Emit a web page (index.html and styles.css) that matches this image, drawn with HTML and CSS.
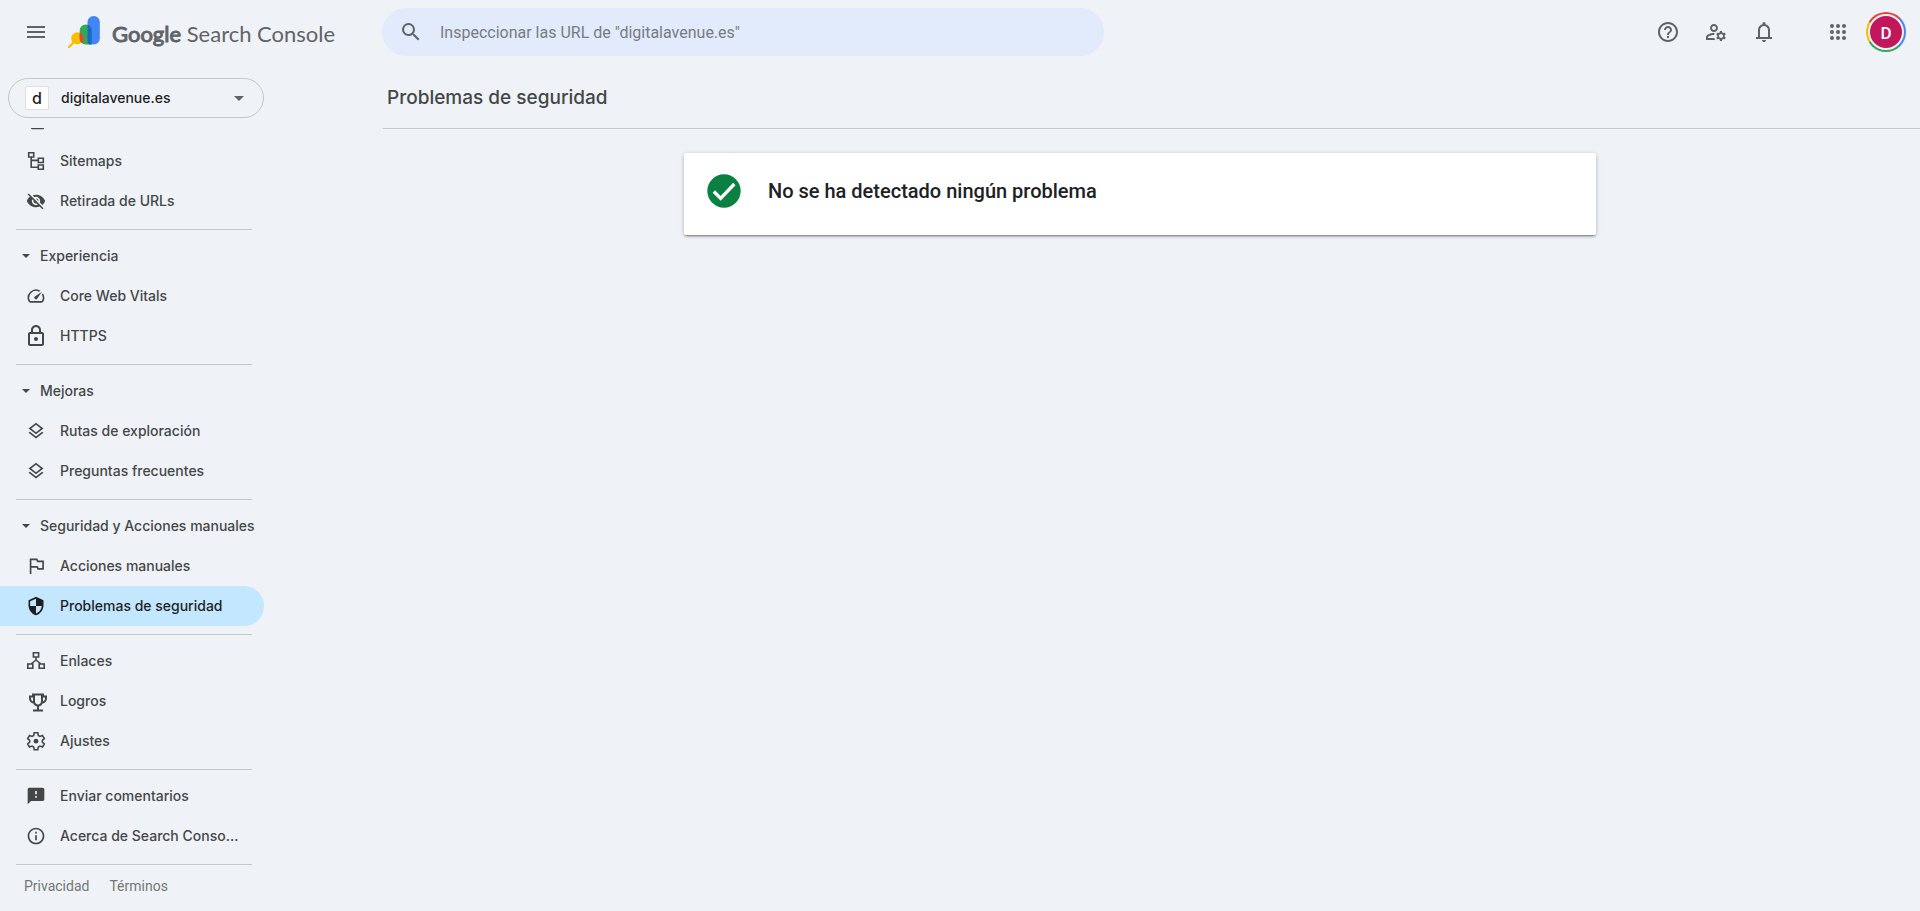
FILE: index.html
```html
<!DOCTYPE html>
<html lang="es">
<head>
<meta charset="utf-8">
<meta name="viewport" content="width=device-width, initial-scale=1">
<title>Problemas de seguridad</title>
<link rel="stylesheet" href="styles.css">
</head>
<body>
<header class="topbar">
  <div class="brand">
    <button class="icon-button" type="button" aria-label="Menú">
      <svg class="icon-lg" viewBox="0 0 24 24"><path d="M3 18h18v-2H3v2zm0-5h18v-2H3v2zm0-7v2h18V6H3z"/></svg>
    </button>
    <a class="logo" href="#">
      <svg class="logo-mark" viewBox="0 0 32 32">
        <path d="M1 31l6-6" stroke="#fbbc04" stroke-width="2.4" stroke-linecap="round"/>
        <circle cx="9.3" cy="22.3" r="6.1" fill="#fbbc04"/>
        <rect x="19.5" width="12.3" height="28.6" rx="6" fill="#4285f4"/>
        <path d="M11.7 14.5a6 6 0 0 1 12 0v14.1h-6a6 6 0 0 1-6-6z" fill="#34a853"/>
        <path d="M19.5 8.8a6 6 0 0 1 4.2 5.7v14.1h-1.2a3 3 0 0 1-3-3z" fill="#1967d2"/>
        <path d="M11.7 16.7a6.1 6.1 0 0 1 1.8 10.2 6 6 0 0 1-1.8-4.3z" fill="#ea4335"/>
      </svg>
      <span class="logo-text"><span class="logo-strong">Google</span> Search Console</span>
    </a>
  </div>
  <label class="search">
    <svg class="icon-lg" viewBox="0 0 24 24"><path d="M15.5 14h-.79l-.28-.27A6.47 6.47 0 0 0 16 9.5 6.5 6.5 0 1 0 9.5 16c1.61 0 3.09-.59 4.23-1.57l.27.28v.79l5 4.99L20.49 19l-4.99-5zm-6 0C7.01 14 5 11.99 5 9.5S7.01 5 9.5 5 14 7.01 14 9.5 11.99 14 9.5 14z"/></svg>
    <input class="search-input" type="text" aria-label="Inspeccionar URL" placeholder="Inspeccionar las URL de &quot;digitalavenue.es&quot;">
  </label>
  <div class="actions">
    <button class="icon-button" type="button" aria-label="Ayuda">
      <svg class="icon-lg" viewBox="0 0 24 24"><path d="M11 18h2v-2h-2v2zm1-16C6.48 2 2 6.48 2 12s4.48 10 10 10 10-4.48 10-10S17.52 2 12 2zm0 18c-4.41 0-8-3.59-8-8s3.59-8 8-8 8 3.59 8 8-3.59 8-8 8zm0-14c-2.21 0-4 1.79-4 4h2c0-1.1.9-2 2-2s2 .9 2 2c0 2-3 1.75-3 5h2c0-2.25 3-2.5 3-5 0-2.21-1.79-4-4-4z"/></svg>
    </button>
    <button class="icon-button" type="button" aria-label="Usuarios">
      <svg class="icon-lg" viewBox="0 0 24 24"><path d="M4 18v-.65c0-.34.16-.66.41-.81C6.1 15.53 8.03 15 10 15c.03 0 .05 0 .08.01.1-.7.3-1.37.59-1.98-.22-.02-.44-.03-.67-.03-2.42 0-4.68.67-6.61 1.82-.88.52-1.39 1.5-1.39 2.53V20h9.26c-.42-.6-.75-1.28-.97-2H4zM10 12c2.21 0 4-1.79 4-4s-1.79-4-4-4-4 1.79-4 4 1.79 4 4 4zm0-6c1.1 0 2 .9 2 2s-.9 2-2 2-2-.9-2-2 .9-2 2-2zM20.75 16c0-.22-.03-.42-.06-.63l1.14-1.01-1-1.73-1.45.49c-.32-.27-.68-.48-1.08-.63L18 11h-2l-.3 1.49c-.4.15-.76.36-1.08.63l-1.45-.49-1 1.73 1.14 1.01c-.03.21-.06.41-.06.63s.03.42.06.63l-1.14 1.01 1 1.73 1.45-.49c.32.27.68.48 1.08.63L16 21h2l.3-1.49c.4-.15.76-.36 1.08-.63l1.45.49 1-1.73-1.14-1.01c.03-.21.06-.41.06-.63zM17 18c-1.1 0-2-.9-2-2s.9-2 2-2 2 .9 2 2-.9 2-2 2z"/></svg>
    </button>
    <button class="icon-button" type="button" aria-label="Notificaciones">
      <svg class="icon-lg" viewBox="0 0 24 24"><path d="M4 19v-2h2v-7q0-2.075 1.25-3.688T10.5 4.2v-.7q0-.625.438-1.063T12 2t1.063.438T13.5 3.5v.7q2 .5 3.25 2.113T18 10v7h2v2zm8 3q-.825 0-1.413-.588T10 20h4q0 .825-.588 1.413T12 22m-4-5h8v-7q0-1.65-1.175-2.825T12 6T9.175 7.175T8 10z"/></svg>
    </button>
    <button class="icon-button apps" type="button" aria-label="Aplicaciones">
      <svg class="icon-lg" viewBox="0 0 24 24"><g><circle cx="6" cy="6" r="2"/><circle cx="12" cy="6" r="2"/><circle cx="18" cy="6" r="2"/><circle cx="6" cy="12" r="2"/><circle cx="12" cy="12" r="2"/><circle cx="18" cy="12" r="2"/><circle cx="6" cy="18" r="2"/><circle cx="12" cy="18" r="2"/><circle cx="18" cy="18" r="2"/></g></svg>
    </button>
    <button class="icon-button" type="button" aria-label="Cuenta">
      <span class="avatar-ring"><span class="avatar">D</span></span>
    </button>
  </div>
</header>
<div class="layout">
  <aside class="sidebar">
    <button class="property" type="button">
      <span class="property-badge">d</span>
      <span class="property-name">digitalavenue.es</span>
      <svg class="property-caret" viewBox="0 0 10 5"><path d="M0 0h10L5 5z"/></svg>
    </button>
    <nav class="nav">
      <div class="nav-clip"><svg class="clip-icon" viewBox="0 0 14 2"><path d="M0 0h14v.4a1.6 1.6 0 0 1-1 1H1a1.6 1.6 0 0 1-1-1z"/></svg></div>
      <a class="nav-item" href="#"><svg class="icon-lg" viewBox="0 0 24 24"><path class="line thin" d="M4.700 3.700h5v4.300h-5zM14.300 9.200h5v4.300h-5zM14.300 16h5v4.300h-5zM7.200 8v10.200h7M7.200 11.400h7"/></svg><span class="nav-label">Sitemaps</span></a>
      <a class="nav-item" href="#"><svg class="icon" viewBox="0 0 24 24"><path d="M12 7c2.760 0 5 2.240 5 5 0 .65-.13 1.260-.36 1.830l2.920 2.920c1.510-1.260 2.700-2.890 3.430-4.750-1.730-4.390-6-7.500-11-7.500-1.400 0-2.740.25-3.980.7l2.160 2.160C10.740 7.130 11.350 7 12 7zM2 4.270l2.740 2.740C3.080 8.300 1.780 10.020 1 12c1.730 4.390 6 7.500 11 7.500 1.550 0 3.030-.3 4.380-.84L19.730 22 21 20.730 3.270 3 2 4.270zM7.530 9.800l1.550 1.550c-.05.21-.08.43-.08.65 0 1.660 1.340 3 3 3 .22 0 .44-.03.65-.08l1.550 1.550c-.67.33-1.410.53-2.200.53-2.760 0-5-2.240-5-5 0-.79.2-1.530.53-2.200zm4.310-.78l3.150 3.150.02-.16c0-1.660-1.340-3-3-3l-.17.01z"/></svg><span class="nav-label">Retirada de URLs</span></a>
      <hr class="rule">
      <button class="nav-group" type="button"><svg class="group-caret" viewBox="0 0 8 4"><path d="M0 0h8L4 4z"/></svg><span class="nav-label">Experiencia</span></button>
      <a class="nav-item" href="#"><svg class="icon" viewBox="0 0 24 24"><path d="M20.380 8.570l-1.230 1.850a8 8 0 0 1-.22 7.580H5.070A8 8 0 0 1 15.580 6.850l1.850-1.230A10 10 0 0 0 3.350 19a2 2 0 0 0 1.720 1h13.850a2 2 0 0 0 1.740-1 10 10 0 0 0-.27-10.440zm-9.790 6.840a2 2 0 0 0 2.830 0l5.660-8.490-8.490 5.660a2 2 0 0 0 0 2.830z"/></svg><span class="nav-label">Core Web Vitals</span></a>
      <a class="nav-item" href="#"><svg class="icon-lg" viewBox="0 0 24 24"><path d="M18 8h-1V6c0-2.760-2.240-5-5-5S7 3.240 7 6v2H6c-1.100 0-2 .9-2 2v10c0 1.100.9 2 2 2h12c1.100 0 2-.9 2-2V10c0-1.100-.9-2-2-2zM9 6c0-1.660 1.340-3 3-3s3 1.340 3 3v2H9V6zm9 14H6V10h12v10zm-6-3c1.100 0 2-.9 2-2s-.9-2-2-2-2 .9-2 2 .9 2 2 2z"/></svg><span class="nav-label">HTTPS</span></a>
      <hr class="rule">
      <button class="nav-group" type="button"><svg class="group-caret" viewBox="0 0 8 4"><path d="M0 0h8L4 4z"/></svg><span class="nav-label">Mejoras</span></button>
      <a class="nav-item" href="#"><svg class="icon" viewBox="0 0 24 24"><path d="M11.990 18.540l-7.370-5.730L3 14.070l9 7 9-7-1.630-1.270-7.380 5.740zM12 16l7.360-5.730L21 9l-9-7-9 7 1.630 1.270L12 16zm0-11.470L17.740 9 12 13.470 6.260 9 12 4.530z"/></svg><span class="nav-label">Rutas de exploración</span></a>
      <a class="nav-item" href="#"><svg class="icon" viewBox="0 0 24 24"><path d="M11.990 18.540l-7.370-5.730L3 14.070l9 7 9-7-1.630-1.270-7.380 5.740zM12 16l7.360-5.730L21 9l-9-7-9 7 1.630 1.270L12 16zm0-11.470L17.740 9 12 13.470 6.260 9 12 4.530z"/></svg><span class="nav-label">Preguntas frecuentes</span></a>
      <hr class="rule">
      <button class="nav-group" type="button"><svg class="group-caret" viewBox="0 0 8 4"><path d="M0 0h8L4 4z"/></svg><span class="nav-label">Seguridad y Acciones manuales</span></button>
      <a class="nav-item" href="#"><svg class="icon" viewBox="0 0 24 24"><path class="line" d="M5.500 21.500V4h7.500l1 2.500h6.500v9h-6l-1-2.500h-8"/></svg><span class="nav-label">Acciones manuales</span></a>
      <a class="nav-item current" href="#" aria-current="page"><svg class="icon" viewBox="0 0 24 24"><path d="M12 1L3 5v6c0 5.550 3.840 10.740 9 12 5.160-1.260 9-6.450 9-12V5l-9-4zm0 10.990h7c-.53 4.120-3.280 7.790-7 8.940V12H5V6.300l7-3.110v8.800z"/></svg><span class="nav-label">Problemas de seguridad</span></a>
      <hr class="rule">
      <a class="nav-item" href="#"><svg class="icon-lg" viewBox="0 0 24 24"><path class="line thin" d="M9.400 3.800h5.200v4.200H9.400zM3.800 15h5v4.200h-5zM15.200 15h5v4.200h-5zM12 8v3.500M12 11l-5 4M12 11l5 4"/></svg><span class="nav-label">Enlaces</span></a>
      <a class="nav-item" href="#"><svg class="icon-lg" viewBox="0 -1.5 24 24"><path d="M23 5h-3V3H8v2H5v3c0 2.550 1.920 4.630 4.390 4.940.63 1.500 1.980 2.630 3.610 2.960V19H9v2h10v-2h-4v-3.100c1.630-.33 2.980-1.460 3.610-2.960C21.080 12.630 23 10.550 23 8V5zM7 8V7h2v3.820C7.840 10.400 7 9.300 7 8zm7 6c-1.650 0-3-1.350-3-3V5h6v6c0 1.650-1.350 3-3 3zm7-6c0 1.300-.84 2.400-2 2.820V7h2v1z"/></svg><span class="nav-label">Logros</span></a>
      <a class="nav-item" href="#"><svg class="icon-lg" viewBox="0 0 24 24"><path class="line thin" d="M10.200 3.800h3.600l.5 2.600 1.700 1 2.500-.9 1.800 3.100-2 1.700v1.900l2 1.700-1.800 3.100-2.500-.9-1.700 1-.5 2.600h-3.600l-.5-2.600-1.700-1-2.500.9-1.800-3.100 2-1.700v-1.900l-2-1.700 1.800-3.100 2.500.9 1.700-1z"/><circle cx="12" cy="12.200" r="2.400"/></svg><span class="nav-label">Ajustes</span></a>
      <hr class="rule">
      <a class="nav-item" href="#"><svg class="icon" viewBox="0 0 24 24"><path d="M20 2H4c-1.100 0-1.990.9-1.990 2L2 22l4-4h14c1.100 0 2-.9 2-2V4c0-1.100-.9-2-2-2zm-7 12h-2v-2h2v2zm0-4h-2V6h2v4z"/></svg><span class="nav-label">Enviar comentarios</span></a>
      <a class="nav-item" href="#"><svg class="icon" viewBox="0 0 24 24"><path d="M11 7h2v2h-2zm0 4h2v6h-2zm1-9C6.480 2 2 6.480 2 12s4.480 10 10 10 10-4.480 10-10S17.520 2 12 2zm0 18c-4.410 0-8-3.590-8-8s3.590-8 8-8 8 3.590 8 8-3.590 8-8 8z"/></svg><span class="nav-label">Acerca de Search Conso...</span></a>
      <hr class="rule">
    </nav>
    <footer class="legal"><a href="#">Privacidad</a><a href="#">Términos</a></footer>
  </aside>
  <main class="main">
    <h1 class="title">Problemas de seguridad</h1>
    <section class="content">
      <div class="card">
        <svg class="card-icon" viewBox="0 0 24 24"><circle cx="12" cy="12" r="10" fill="#0b8043"/><path d="M5.900 12.300l4.100 4.100 8.200-8.600" fill="none" stroke="#fff" stroke-width="2"/></svg>
        <h2 class="card-title">No se ha detectado ningún problema</h2>
      </div>
    </section>
  </main>
</div>
</body>
</html>
```
FILE: styles.css
```css
* { box-sizing: border-box; }

body {
  margin: 0;
  min-height: 100vh;
  background: #eff3f8;
  color: #444746;
  font-family: Inter, "Liberation Sans", sans-serif;
  font-size: 14px;
}

a { color: inherit; text-decoration: none; }

button {
  margin: 0;
  padding: 0;
  border: 0;
  background: none;
  color: inherit;
  font: inherit;
  cursor: pointer;
}

svg { display: block; flex: none; fill: currentColor; }
.icon { width: 20px; height: 20px; margin: 0 2px; }
.icon-lg { width: 24px; height: 24px; }
.line { fill: none; stroke: currentColor; stroke-width: 2; }
.thin { stroke-width: 1.6; }

.topbar {
  display: flex;
  align-items: center;
  height: 64px;
  padding: 0 10px 0 12px;
  color: #5f6368;
}

.brand { display: flex; align-items: center; flex: none; width: 370px; }

.icon-button {
  display: flex;
  align-items: center;
  justify-content: center;
  width: 48px;
  height: 48px;
}

.logo { display: flex; align-items: center; gap: 12px; padding-left: 8px; }
.logo-mark { width: 32px; height: 32px; }
.logo-text {
  padding-top: 4px;
  font-family: Lato, sans-serif;
  font-size: 22px;
  line-height: 32px;
  white-space: nowrap;
}
.logo-strong { -webkit-text-stroke: 1px currentColor; }

.search {
  display: flex;
  align-items: center;
  gap: 17px;
  flex: 0 1 722px;
  height: 48px;
  padding: 0 17px;
  border-radius: 24px;
  background: #e1ebfc;
}

.search-input {
  flex: 1;
  min-width: 0;
  padding: 2px 0 0;
  border: 0;
  outline: 0;
  background: none;
  color: #444746;
  font: 16px/24px Roboto, sans-serif;
}
.search-input::placeholder { color: #777b82; opacity: 1; }

.actions { display: flex; margin-left: auto; }
.apps { margin-left: 26px; }

.avatar-ring {
  display: flex;
  width: 40px;
  height: 40px;
  padding: 2px;
  border-radius: 50%;
  background: conic-gradient(#ea4335 0 45deg, #4285f4 45deg 140deg, #34a853 140deg 240deg, #fbbc04 240deg 300deg, #ea4335 300deg);
}
.avatar {
  flex: 1;
  border: 2px solid #eff3f8;
  border-radius: 50%;
  background: #c2185b;
  color: #fff;
  font: 500 17px/34px Roboto, sans-serif;
  text-align: center;
}

.layout { display: grid; grid-template-columns: 264px 1fr; column-gap: 119px; }

.sidebar { padding-top: 14px; }

.property {
  display: flex;
  align-items: center;
  width: 256px;
  height: 40px;
  margin-left: 8px;
  padding: 0 19px 0 16px;
  border: 1px solid #c4c7c5;
  border-radius: 20px;
  color: #1f1f1f;
  font-weight: 500;
}
.property-badge {
  width: 24px;
  border: 1px solid #e0e0e0;
  border-radius: 2px;
  background: #fff;
  font-size: 16px;
  line-height: 22px;
  text-align: center;
}
.property-name { flex: 1; padding: 0 0 2px 12px; text-align: left; }
.property-caret { width: 10px; height: 5px; color: #5f6368; }

.nav { padding-top: 10px; font-weight: 500; }
.nav-clip { height: 13px; padding-left: 31px; }
.clip-icon { width: 13px; height: 2px; }

.nav-item {
  display: flex;
  align-items: center;
  gap: 12px;
  height: 40px;
  padding: 0 20px 0 24px;
  border-radius: 0 20px 20px 0;
}
.nav-label {
  overflow: hidden;
  line-height: 20px;
  text-overflow: ellipsis;
  white-space: nowrap;
}
.current { background: #c2e7ff; color: #1f1f1f; }

.nav-group {
  display: flex;
  align-items: center;
  gap: 10px;
  height: 40px;
  padding-left: 22px;
}
.group-caret { width: 8px; height: 4px; }

.rule { height: 1px; margin: 8px 12px 6px 16px; border: 0; background: #c4c7c5; }

.legal {
  display: flex;
  gap: 20px;
  padding: 3px 24px;
  color: #747775;
  font: 14px/24px Roboto, sans-serif;
}

.title {
  margin: 0;
  padding: 18px 4px 14px;
  border-bottom: 1px solid #c4c7c5;
  font-size: 19px;
  font-weight: 500;
  line-height: 32px;
}

.content { padding: 24px 23px 24px 0; }

.card {
  display: flex;
  align-items: flex-start;
  gap: 24px;
  max-width: 912px;
  margin: 0 auto;
  padding: 18px 20px 24px;
  border-radius: 2px;
  background: #fff;
  box-shadow: 0 2px 2px -1px rgba(0, 0, 0, 0.4), 0 1px 4px rgba(0, 0, 0, 0.25);
}
.card-icon { width: 40px; height: 40px; }
.card-title {
  margin: 0;
  color: #202124;
  font: 500 20px/40px Roboto, sans-serif;
}
```
